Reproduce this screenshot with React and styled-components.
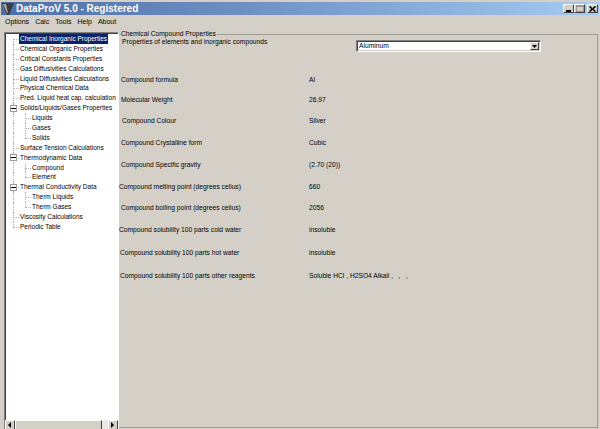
import React from "react";
import styled, { createGlobalStyle } from "styled-components";

const GlobalStyle = createGlobalStyle`
  html, body {
    margin: 0;
    padding: 0;
    background: #d4d0c8;
  }
  body {
    font-family: "Liberation Sans", Arial, sans-serif;
    font-size: 7px;
    color: #000;
  }
`;

const treeItems = [
  { label: "Chemical Inorganic Properties", level: 0, selected: true, first: true },
  { label: "Chemical Organic Properties", level: 0 },
  { label: "Critical Constants Properties", level: 0 },
  { label: "Gas Diffusivities Calculations", level: 0 },
  { label: "Liquid Diffusivities Calculations", level: 0 },
  { label: "Physical Chemical Data", level: 0 },
  { label: "Pred. Liquid heat cap. calculation", level: 0 },
  { label: "Solids/Liquids/Gases Properties", level: 0, open: true },
  { label: "Liquids", level: 1 },
  { label: "Gases", level: 1 },
  { label: "Solids", level: 1, last: true },
  { label: "Surface Tension Calculations", level: 0 },
  { label: "Thermodynamic Data", level: 0, open: true },
  { label: "Compound", level: 1 },
  { label: "Element", level: 1, last: true },
  { label: "Thermal Conductivity Data", level: 0, open: true },
  { label: "Therm Liquids", level: 1 },
  { label: "Therm Gases", level: 1, last: true },
  { label: "Viscosity Calculations", level: 0 },
  { label: "Periodic Table", level: 0, last: true },
];

const properties = [
  { label: "Compound formula", value: "Al", h: 20.2, indent: 2 },
  { label: "Molecular Weight", value: "26.97", h: 20.6, indent: 2 },
  { label: "Compound Colour", value: "Silver", h: 20.9, indent: 3 },
  { label: "Compound Crystalline form", value: "Cubic", h: 22.5, indent: 2 },
  { label: "Compound Specific gravity", value: "(2.70 (20))", h: 22.6, indent: 2 },
  { label: "Compound melting point (degrees celius)", value: "660", h: 20.7, indent: 0 },
  { label: "Compound boiling point (degrees celius)", value: "2056", h: 21.8, indent: 2 },
  { label: "Compound solubility 100 parts cold water", value: "insoluble", h: 21.7, indent: 0 },
  { label: "Compound solubility 100 parts hot water", value: "insoluble", h: 25, indent: 1 },
  { label: "Compound solubility 100 parts other reagents", value: "Soluble HCl , H2SO4 Alkali ,   ,   ,", h: 20, indent: 1 },
];

function AppIcon() {
  return (
    <svg width="12" height="12" viewBox="0 0 12 12">
      <polygon points="0,0 12,0 7,12 5,12" fill="#3c3c3c" />
      <polygon points="1,1 4,1 6,10 5,10" fill="#a8a8a8" />
    </svg>
  );
}

function Branch({ width, x, from, to, dash }) {
  return <BranchCell $w={width} $x={x} $from={from} $to={to} $dash={dash} />;
}

function TreeRow({ item }) {
  const isLastRoot = item.level === 0 && item.last;
  return (
    <Row>
      {item.level === 0 ? (
        <BranchCell
          $w={13}
          $x={7}
          $from={item.first ? "mid" : "top"}
          $to={isLastRoot ? "mid" : "bottom"}
          $dash
        >
          {item.open && (
            <Expander>
              <svg width="5" height="5" viewBox="0 0 5 5">
                <rect x="0" y="2" width="5" height="1" fill="#000" />
              </svg>
            </Expander>
          )}
        </BranchCell>
      ) : (
        <>
          <Branch width={13} x={7} from="top" to="bottom" />
          <Branch width={12} x={6} from="top" to={item.last ? "mid" : "bottom"} dash />
        </>
      )}
      <TreeLabel $selected={item.selected}>{item.label}</TreeLabel>
    </Row>
  );
}

export default function App() {
  return (
    <>
      <GlobalStyle />
      <Window>
        <TitleBar>
          <AppIcon />
          <Title>DataProV 5.0 - Registered</Title>
          <Caption>
            <CaptionButton>
              <svg width="6" height="6" viewBox="0 0 6 6">
                <rect x="0" y="4" width="5" height="2" fill="#000" />
              </svg>
            </CaptionButton>
            <CaptionButton>
              <svg width="8" height="7" viewBox="0 0 8 7">
                <rect x="0.5" y="0.5" width="7" height="6" fill="none" stroke="#9a968e" />
                <rect x="0" y="0" width="8" height="2" fill="#9a968e" />
              </svg>
            </CaptionButton>
            <CaptionButton $gap>
              <svg width="7" height="6" viewBox="0 0 7 6">
                <path d="M0.5 0.5 L6.5 5.5 M6.5 0.5 L0.5 5.5" stroke="#000" strokeWidth="1.6" />
              </svg>
            </CaptionButton>
          </Caption>
        </TitleBar>
        <MenuBar>
          {["Options", "Calc", "Tools", "Help", "About"].map((m) => (
            <MenuItem key={m}>{m}</MenuItem>
          ))}
        </MenuBar>
        <Main>
          <TreePanel>
            <TreeList>
              {treeItems.map((item, i) => (
                <TreeRow key={i} item={item} />
              ))}
            </TreeList>
            <HScroll>
              <ScrollButton>
                <svg width="4" height="6" viewBox="0 0 4 6">
                  <polygon points="3,0 3,6 0,3" fill="#000" />
                </svg>
              </ScrollButton>
              <Thumb />
              <Track />
              <ScrollButton>
                <svg width="4" height="6" viewBox="0 0 4 6">
                  <polygon points="0,0 0,6 3,3" fill="#000" />
                </svg>
              </ScrollButton>
            </HScroll>
          </TreePanel>
          <Group>
            <Legend>Chemical Compound Properties</Legend>
            <Header>
              <Subtitle>Properties of elements and inorganic compounds</Subtitle>
              <Select>
                <SelectText>Aluminum</SelectText>
                <SelectButton>
                  <svg width="5" height="3" viewBox="0 0 5 3">
                    <polygon points="0,0 5,0 2.5,3" fill="#000" />
                  </svg>
                </SelectButton>
              </Select>
            </Header>
            <PropGrid>
              {properties.map((p) => (
                <PropRow key={p.label} $h={p.h}>
                  <PropLabel $indent={p.indent}>{p.label}</PropLabel>
                  <PropValue>{p.value}</PropValue>
                </PropRow>
              ))}
            </PropGrid>
          </Group>
        </Main>
      </Window>
    </>
  );
}

const Window = styled.div`
  width: 600px;
  height: 429px;
  overflow: hidden;
  box-sizing: border-box;
  padding: 2px 1px 0 1px;
  display: flex;
  flex-direction: column;
  background: #d4d0c8;
`;

const TitleBar = styled.div`
  height: 13px;
  flex: 0 0 13px;
  display: flex;
  align-items: center;
  padding-left: 1px;
  background: linear-gradient(90deg, #4e6ea8 0%, #6f8fc4 40%, #a6caf0 100%);
`;

const Title = styled.span`
  margin-left: 2px;
  color: #fff;
  font-weight: bold;
  font-size: 10px;
  line-height: 13px;
  white-space: nowrap;
`;

const Caption = styled.div`
  margin-left: auto;
  margin-right: 1px;
  display: flex;
  align-items: center;
`;

const CaptionButton = styled.div`
  width: 11px;
  height: 9px;
  margin-left: ${(p) => (p.$gap ? "2px" : "0")};
  box-sizing: border-box;
  background: #d4d0c8;
  border-top: 1px solid #fff;
  border-left: 1px solid #fff;
  border-right: 1px solid #404040;
  border-bottom: 1px solid #404040;
  display: flex;
  align-items: center;
  justify-content: center;
`;

const MenuBar = styled.div`
  height: 14px;
  flex: 0 0 14px;
  display: flex;
  align-items: center;
  padding-left: 1px;
`;

const MenuItem = styled.span`
  padding: 0 3px;
  font-size: 7px;
  line-height: 14px;
`;

const Main = styled.div`
  flex: 1;
  display: flex;
  margin-top: 1px;
  min-height: 0;
`;

const TreePanel = styled.div`
  width: 115px;
  flex: 0 0 115px;
  margin: 2px 0 -4px 3px;
  box-sizing: border-box;
  border-top: 1px solid #808080;
  border-left: 1px solid #808080;
  border-right: 1px solid #fff;
  border-bottom: 1px solid #fff;
  box-shadow: inset 1px 1px 0 #404040;
  background: #fff;
  display: flex;
  flex-direction: column;
  overflow: hidden;
`;

const TreeList = styled.div`
  flex: 1;
  padding: 1px 0 0 1px;
  overflow: hidden;
`;

const Row = styled.div`
  height: 9.9px;
  display: flex;
  align-items: stretch;
  white-space: nowrap;
`;

const BranchCell = styled.span`
  position: relative;
  flex: 0 0 ${(p) => p.$w}px;
  &::before {
    content: "";
    position: absolute;
    left: ${(p) => p.$x}px;
    top: ${(p) => (p.$from === "mid" ? "50%" : "0")};
    bottom: ${(p) => (p.$to === "mid" ? "50%" : "0")};
    border-left: 1px dotted #b4b4b4;
  }
  &::after {
    content: ${(p) => (p.$dash ? '""' : "none")};
    position: absolute;
    left: ${(p) => p.$x}px;
    right: 0;
    top: 50%;
    border-top: 1px dotted #b4b4b4;
  }
`;

const Expander = styled.span`
  position: absolute;
  z-index: 1;
  left: 4px;
  top: 1.5px;
  width: 7px;
  height: 7px;
  box-sizing: border-box;
  border: 1px solid #9a9a9a;
  background: #fff;
  display: flex;
  align-items: center;
  justify-content: center;
`;

const TreeLabel = styled.span`
  padding: 0 1px;
  font-size: 6.5px;
  line-height: 9.9px;
  background: ${(p) => (p.$selected ? "#0a246a" : "transparent")};
  color: ${(p) => (p.$selected ? "#fff" : "#000")};
`;

const HScroll = styled.div`
  height: 10px;
  flex: 0 0 10px;
  display: flex;
  margin-bottom: 2px;
  background: #ebe9e4;
`;

const ScrollButton = styled.div`
  width: 10px;
  flex: 0 0 10px;
  box-sizing: border-box;
  background: #d4d0c8;
  border-top: 1px solid #fff;
  border-left: 1px solid #fff;
  border-right: 1px solid #404040;
  border-bottom: 1px solid #404040;
  display: flex;
  align-items: center;
  justify-content: center;
`;

const Thumb = styled(ScrollButton)`
  flex: 1;
  width: auto;
`;

const Track = styled.div`
  width: 6px;
  flex: 0 0 6px;
`;

const Group = styled.fieldset`
  flex: 1;
  margin: 0 1px 1px 0;
  padding: 0;
  min-width: 0;
  border: 1px solid #a09c94;
  border-left: none;
`;

const Legend = styled.legend`
  margin-left: 2px;
  padding: 0 1px 0 0;
  font-size: 6.7px;
  line-height: 8px;
`;

const Header = styled.div`
  display: flex;
  align-items: flex-start;
  height: 14px;
`;

const Subtitle = styled.span`
  margin-left: 3px;
  font-size: 6.7px;
  line-height: 8px;
`;

const Select = styled.div`
  margin: 2px 56px 0 auto;
  width: 185px;
  height: 12px;
  box-sizing: border-box;
  background: #fff;
  border-top: 1px solid #808080;
  border-left: 1px solid #808080;
  border-right: 1px solid #fff;
  border-bottom: 1px solid #fff;
  box-shadow: inset 1px 1px 0 #404040, inset -1px -1px 0 #d4d0c8;
  display: flex;
  align-items: center;
  padding: 1px;
`;

const SelectText = styled.span`
  flex: 1;
  padding-left: 1px;
  font-size: 6.7px;
  line-height: 8px;
`;

const SelectButton = styled(ScrollButton)`
  width: 9px;
  flex: 0 0 9px;
  height: 8px;
`;

const PropGrid = styled.div`
  margin-top: 17.4px;
  display: flex;
  flex-direction: column;
`;

const PropRow = styled.div`
  height: ${(p) => p.$h}px;
  display: grid;
  grid-template-columns: 190px 1fr;
  align-items: center;
  white-space: pre;
  font-size: 6.7px;
`;

const PropLabel = styled.span`
  margin-left: ${(p) => p.$indent}px;
`;

const PropValue = styled.span``;
